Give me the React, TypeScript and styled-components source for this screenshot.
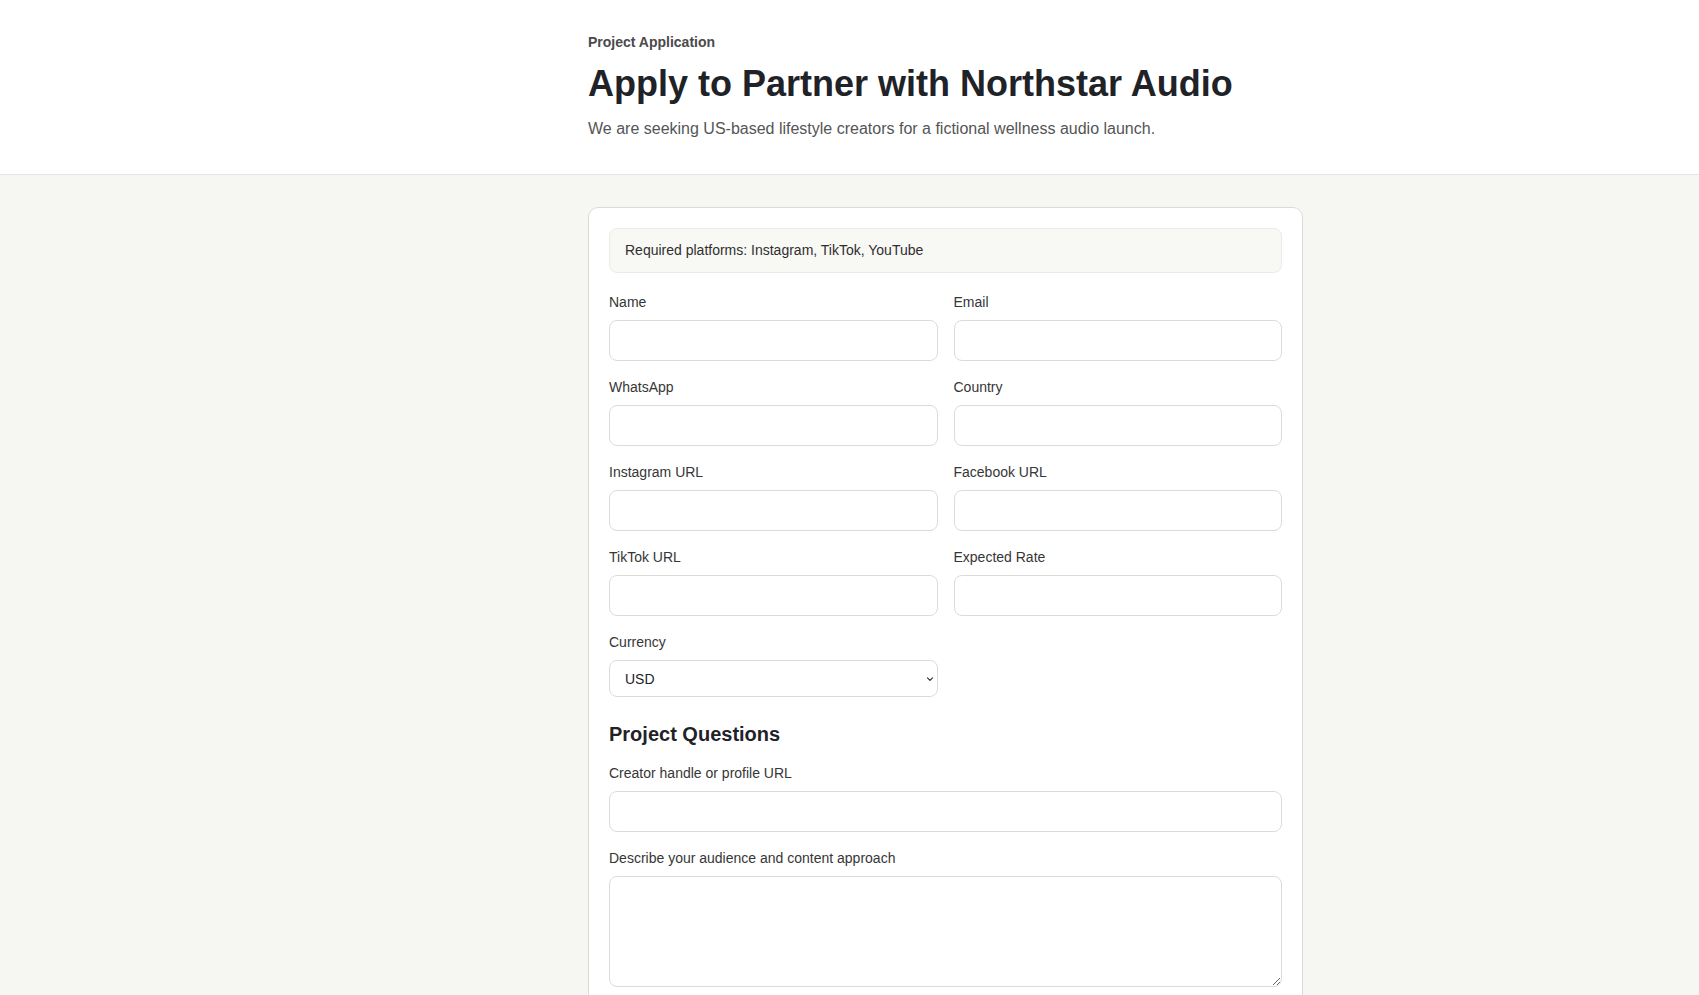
import React from "react";
import styled, { createGlobalStyle } from "styled-components";

const GlobalStyle = createGlobalStyle`
  * { box-sizing: border-box; }
  html, body { margin: 0; padding: 0; }
  body {
    background: #f6f6f2;
    font-family: "Liberation Sans", Arial, Helvetica, sans-serif;
    color: #1f2328;
  }
`;

const Header = styled.header`
  background: #ffffff;
  border-bottom: 1px solid #e6e6e0;
  padding: 34px 0 33px;
`;

const Column = styled.div`
  width: 715px;
  margin-left: calc(50% - 261.5px);
`;

const Eyebrow = styled.div`
  font-size: 14px;
  line-height: 16px;
  font-weight: 700;
  color: #4a4a4a;
`;

const Title = styled.h1`
  margin: 12px 0 0;
  font-size: 36px;
  line-height: 1.2;
  font-weight: 700;
  color: #1f2328;
`;

const Subtitle = styled.p`
  margin: 12px 0 0;
  font-size: 16px;
  line-height: 24px;
  color: #555555;
`;

const Main = styled.main`
  padding: 32px 0 40px;
`;

const Card = styled.form`
  background: #ffffff;
  border: 1px solid #dcdcd6;
  border-radius: 10px;
  padding: 20px;
`;

const Notice = styled.div`
  background: #f8f8f4;
  border: 1px solid #ecece6;
  border-radius: 8px;
  padding: 12px 15px;
  font-size: 14px;
  line-height: 19px;
  color: #2f2f2f;
  margin-bottom: 19px;
`;

const Grid = styled.div`
  display: grid;
  grid-template-columns: 1fr 1fr;
  column-gap: 16px;
  row-gap: 16px;
`;

const Field = styled.div<{ $full?: boolean }>`
  display: flex;
  flex-direction: column;
  grid-column: ${(p) => (p.$full ? "1 / -1" : "auto")};
`;

const Label = styled.label`
  font-size: 14px;
  line-height: 21px;
  color: #363636;
  margin-bottom: 7px;
`;

const Input = styled.input`
  height: 41px;
  width: 100%;
  border: 1px solid #dcdcd6;
  border-radius: 8px;
  background: #ffffff;
  padding: 0 12px;
  font-family: inherit;
  font-size: 14px;
  outline: none;
`;

const SelectWrap = styled.div`
  position: relative;
`;

const Select = styled.select`
  appearance: none;
  -webkit-appearance: none;
  height: 37px;
  width: 100%;
  border: 1px solid #dcdcd6;
  border-radius: 8px;
  background: #ffffff;
  padding: 0 28px 0 15px;
  font-family: inherit;
  font-size: 14px;
  color: #1f2328;
  outline: none;
`;

const Chevron = styled.svg`
  position: absolute;
  right: 3px;
  top: 50%;
  transform: translateY(-50%);
  pointer-events: none;
`;

const SectionTitle = styled.h2`
  margin: 24px 0 16px;
  font-size: 20px;
  line-height: 26px;
  font-weight: 700;
  color: #1f2328;
`;

const Stack = styled.div`
  display: flex;
  flex-direction: column;
  gap: 16px;
`;

const TextArea = styled.textarea`
  height: 111px;
  width: 100%;
  border: 1px solid #dcdcd6;
  border-radius: 8px;
  background: #ffffff;
  padding: 10px 12px;
  font-family: inherit;
  font-size: 14px;
  resize: vertical;
  outline: none;
`;

const fields: string[] = [
  "Name",
  "Email",
  "WhatsApp",
  "Country",
  "Instagram URL",
  "Facebook URL",
  "TikTok URL",
  "Expected Rate",
];

export default function App() {
  return (
    <>
      <GlobalStyle />
      <Header>
        <Column>
          <Eyebrow>Project Application</Eyebrow>
          <Title>Apply to Partner with Northstar Audio</Title>
          <Subtitle>
            We are seeking US-based lifestyle creators for a fictional wellness audio launch.
          </Subtitle>
        </Column>
      </Header>
      <Main>
        <Column>
          <Card onSubmit={(e) => e.preventDefault()}>
            <Notice>Required platforms: Instagram, TikTok, YouTube</Notice>
            <Grid>
              {fields.map((f) => (
                <Field key={f}>
                  <Label>{f}</Label>
                  <Input type="text" />
                </Field>
              ))}
              <Field>
                <Label>Currency</Label>
                <SelectWrap>
                  <Select defaultValue="USD">
                    <option value="USD">USD</option>
                    <option value="EUR">EUR</option>
                    <option value="GBP">GBP</option>
                  </Select>
                  <Chevron width="10" height="10" viewBox="0 0 10 10" fill="none">
                    <path d="M2.5 3.8 L5 6.3 L7.5 3.8" stroke="#333" strokeWidth="1.2" strokeLinecap="round" strokeLinejoin="round" />
                  </Chevron>
                </SelectWrap>
              </Field>
            </Grid>
            <SectionTitle>Project Questions</SectionTitle>
            <Stack>
              <Field>
                <Label>Creator handle or profile URL</Label>
                <Input type="text" />
              </Field>
              <Field>
                <Label>Describe your audience and content approach</Label>
                <TextArea />
              </Field>
            </Stack>
          </Card>
        </Column>
      </Main>
    </>
  );
}
